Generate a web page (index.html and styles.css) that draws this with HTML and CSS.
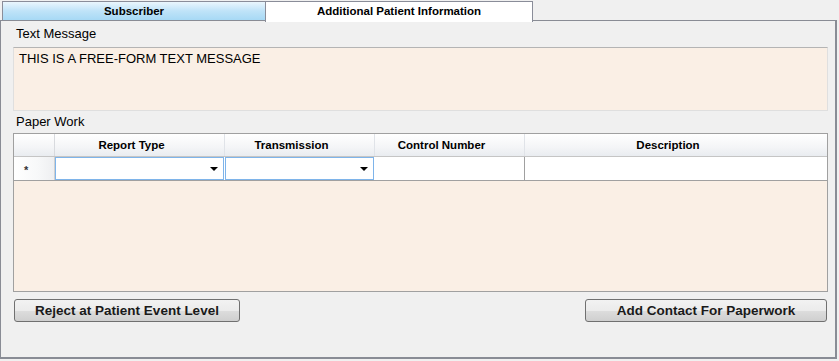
FILE: index.html
```html
<!DOCTYPE html>
<html lang="en">
  <head>
    <meta charset="UTF-8" />
    <title>Additional Patient Information</title>
    <link rel="stylesheet" href="styles.css">
  </head>
  <body>
    <div class="tabs">
      <div class="tab">Subscriber</div>
      <div class="tab active">Additional Patient Information</div>
    </div>
    <div class="panel">
      <div class="label">Text Message</div>
      <div class="message">THIS IS A FREE-FORM TEXT MESSAGE</div>

      <div class="label paper">Paper Work</div>
      <div class="grid">
        <div class="row head">
          <div class="cell rowhead"></div>
          <div class="cell c1">Report Type</div>
          <div class="cell c2">Transmission</div>
          <div class="cell c3">Control Number</div>
          <div class="cell c4">Description</div>
        </div>
        <div class="row data">
          <div class="cell rowhead">*</div>
          <div class="cell c1 combo"><span class="arrow"></span></div>
          <div class="cell c2 combo"><span class="arrow"></span></div>
          <div class="cell c3"></div>
          <div class="cell c4"></div>
        </div>
      </div>

      <div class="buttons">
        <button class="btn reject">Reject at Patient Event Level</button>
        <button class="btn add">Add Contact For Paperwork</button>
      </div>
    </div>
  </body>
</html>
```

FILE: styles.css
```css
body {
  margin: 0;
  width: 839px;
  height: 361px;
  background: #f0f0f0;
  font-family: "Liberation Sans", Arial, sans-serif;
  font-size: 13px;
  color: #000;
  overflow: hidden;
}
.tabs {
  display: flex;
  align-items: flex-end;
  height: 21px;
  padding-left: 2px;
  position: relative;
  z-index: 1;
}
.tab {
  box-sizing: border-box;
  width: 264px;
  height: 19px;
  margin-bottom: 1px;
  border: 1px solid #8a8d99;
  border-bottom: none;
  background: linear-gradient(#eaf6fd, #bfe3f8 50%, #a7d9f5);
  font-weight: bold;
  font-size: 11.5px;
  text-align: center;
  line-height: 19px;
}
.tab.active {
  width: 268px;
  height: 21px;
  margin-bottom: -1px;
  margin-left: -1px;
  background: #fff;
  line-height: 19px;
}
.panel {
  box-sizing: border-box;
  width: 837px;
  height: 339px;
  margin-top: -1px;
  border: 2px solid #898c95;
  border-top-width: 1px;
  border-left-width: 1px;
  padding: 6px 7px 0 12px;
}
.label {
  font-size: 13px;
  line-height: 14px;
  padding-left: 3px;
  height: 20px;
}
.message {
  box-sizing: border-box;
  height: 64px;
  background: #faefe5;
  border: 1px solid #dfdfdf;
  border-top-color: #b4b4b4;
  padding: 3px 5px;
  line-height: 15px;
}
.paper {
  margin-top: 4px;
  height: 18px;
}
.grid {
  box-sizing: border-box;
  height: 159px;
  border: 1px solid #a0a0a0;
  background: #faefe5;
}
.row {
  display: flex;
}
.row.head {
  height: 22px;
  background: linear-gradient(#ffffff, #f4f5f7 60%, #e9ecf0);
  border-bottom: 1px solid #c5c5c5;
}
.row.head .cell {
  border-right: 1px solid #e0e3e8;
  font-weight: bold;
  font-size: 11.5px;
  text-align: center;
  line-height: 22px;
  padding-right: 16px;
}
.row.head .rowhead {
  border-right-color: #d8dade;
  padding-right: 0;
}
.row.data {
  height: 23px;
  border-bottom: 1px solid #a0a0a0;
  background: #fff;
}
.row.data .cell {
  border-right: 1px solid #a0a0a0;
  position: relative;
}
.cell {
  box-sizing: border-box;
  flex: none;
}
.rowhead {
  width: 41px;
}
.row.data .rowhead {
  background: linear-gradient(90deg, #ffffff, #f7f8f9 60%, #eeeff1);
  color: #333;
  font-size: 11px;
  font-weight: bold;
  padding-left: 10px;
  line-height: 27px;
  border-right-color: #d0d0d0;
}
.c1 {
  width: 170px;
}
.c2 {
  width: 150px;
}
.c3 {
  width: 150px;
}
.c4 {
  flex: 1 !important;
  border-right: none !important;
}
.combo {
  border: 1px solid #7eb4ea !important;
  margin-right: 1px;
}
.row.data .rowhead + .combo {
  border-left-width: 1px;
}
.c1.combo {
  width: 169px;
}
.c2.combo {
  width: 149px;
}
.arrow {
  position: absolute;
  right: 5px;
  top: 9px;
  border-left: 4px solid transparent;
  border-right: 4px solid transparent;
  border-top: 4px solid #000;
}
.buttons {
  display: flex;
  justify-content: space-between;
  margin-top: 7px;
  padding-left: 1px;
}
.btn {
  box-sizing: border-box;
  height: 23px;
  border: 1px solid #707070;
  border-radius: 3px;
  background: linear-gradient(#f2f2f2, #ebebeb 50%, #dddddd 51%, #cfcfcf);
  font-family: "Liberation Sans", Arial, sans-serif;
  font-size: 13.5px;
  font-weight: bold;
  color: #1a1a1a;
  padding: 0;
}
.reject {
  width: 226px;
}
.add {
  width: 242px;
  margin-right: 1px;
}
```
